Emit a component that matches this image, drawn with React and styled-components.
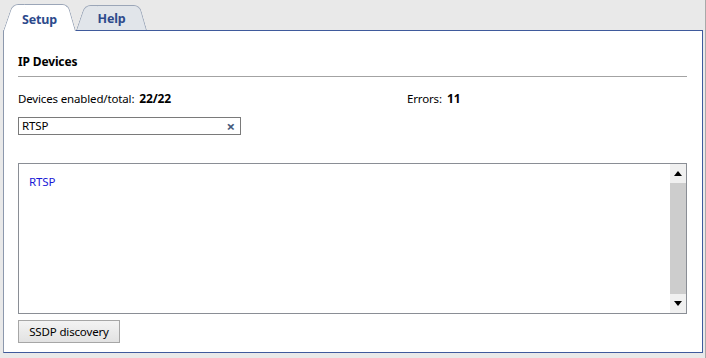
import React from "react";
import styled, { createGlobalStyle } from "styled-components";

const GlobalStyle = createGlobalStyle`
  html, body {
    margin: 0;
    padding: 0;
    background: #e9e9e9;
  }
  body {
    font-family: "Noto Sans", "Open Sans", sans-serif;
    font-size: 11.5px;
    letter-spacing: -0.15px;
    color: #000;
  }
`;

const Page = styled.div`
  box-sizing: border-box;
  width: 706px;
  height: 358px;
  padding: 4px 0 0 3px;
  border-right: 1px solid #a9a9a9;
  overflow: hidden;
`;

const TabRow = styled.div`
  display: flex;
  align-items: flex-end;
  height: 26px;
  position: relative;
  z-index: 2;
`;

const Tab = styled.div`
  position: relative;
  box-sizing: border-box;
  width: ${(p) => p.$width}px;
  height: ${(p) => (p.$active ? 27 : 25)}px;
  margin-bottom: ${(p) => (p.$active ? -1 : 0)}px;
  z-index: ${(p) => (p.$active ? 2 : 1)};
  display: flex;
  align-items: center;
  justify-content: center;
  padding-top: ${(p) => (p.$active ? 4 : 2)}px;
  font-size: 12.5px;
  font-weight: bold;
  color: #2d4a8c;
  cursor: pointer;

  &::before,
  &::after {
    content: "";
    position: absolute;
    top: 0;
    bottom: 0;
    width: 60%;
    box-sizing: border-box;
    background: ${(p) => (p.$active ? "#fff" : "#e1e5ea")};
    border-top: 1px solid #9ba6b8;
  }
  &::before {
    left: 0;
    border-left: 1px solid #9ba6b8;
    border-top-left-radius: 6px;
    transform: skewX(-19deg);
    transform-origin: bottom left;
  }
  &::after {
    right: 0;
    border-right: 1px solid #9ba6b8;
    border-top-right-radius: 6px;
    transform: skewX(16deg);
    transform-origin: bottom right;
  }

  span {
    position: relative;
    z-index: 1;
  }
`;

const Panel = styled.div`
  box-sizing: border-box;
  width: 700px;
  height: 323px;
  background: #fff;
  border: 1px solid #3f5a9c;
  border-left-color: #8c98ad;
  padding: 23px 15px 0 14px;
  display: flex;
  flex-direction: column;
  position: relative;
  z-index: 1;
`;

const Heading = styled.div`
  font-weight: bold;
  font-size: 12px;
  line-height: 16px;
  padding-bottom: 6px;
  border-bottom: 1px solid #a3a3a3;
`;

const StatsRow = styled.div`
  display: flex;
  line-height: 16px;
  margin-top: 14px;
`;

const Stat = styled.div`
  width: ${(p) => p.$width || "auto"};
  white-space: nowrap;

  b {
    margin-left: 5px;
    font-size: 12px;
  }
`;

const SearchBox = styled.div`
  box-sizing: border-box;
  width: 223px;
  height: 18px;
  margin-top: 10px;
  border: 1px solid #7a7a7a;
  display: flex;
  align-items: center;
  padding: 0 5px 0 3px;
`;

const SearchText = styled.div`
  flex: 1;
  line-height: 16px;
`;

const ClearButton = styled.span`
  font-size: 15px;
  font-weight: bold;
  color: #44587c;
  line-height: 16px;
  cursor: pointer;
`;

const ListBox = styled.div`
  box-sizing: border-box;
  height: 151px;
  margin-top: 28px;
  border: 1px solid #8a8e95;
  display: flex;
`;

const ListItems = styled.div`
  flex: 1;
  padding: 10px 0 0 10px;
`;

const ListLink = styled.a`
  color: #1a1ad6;
  text-decoration: none;
  line-height: 16px;
`;

const ScrollBar = styled.div`
  width: 16px;
  display: flex;
  flex-direction: column;
  background: #f0f0f0;
`;

const ScrollButton = styled.div`
  height: 19px;
  display: flex;
  align-items: center;
  justify-content: center;

  &::after {
    content: "";
    width: 0;
    height: 0;
    border-left: 4px solid transparent;
    border-right: 4px solid transparent;
    ${(p) =>
      p.$dir === "up"
        ? "border-bottom: 5px solid #000;"
        : "border-top: 5px solid #000;"}
  }
`;

const ScrollThumb = styled.div`
  flex: 1;
  background: #cdcdcd;
`;

const Button = styled.button`
  box-sizing: border-box;
  align-self: flex-start;
  margin-top: 6px;
  width: 102px;
  height: 23px;
  border: 1px solid #a6a6a6;
  background: linear-gradient(#f3f3f3, #e2e2e2);
  font-family: inherit;
  font-size: 11.5px;
  letter-spacing: -0.15px;
  color: #000;
  padding: 0;
`;

export default function App() {
  return (
    <Page>
      <GlobalStyle />
      <TabRow>
        <Tab $active $width={73}>
          <span>Setup</span>
        </Tab>
        <Tab $width={71}>
          <span>Help</span>
        </Tab>
      </TabRow>
      <Panel>
        <Heading>IP Devices</Heading>
        <StatsRow>
          <Stat $width="389px">
            Devices enabled/total:<b>22/22</b>
          </Stat>
          <Stat>
            Errors:<b>11</b>
          </Stat>
        </StatsRow>
        <SearchBox>
          <SearchText>RTSP</SearchText>
          <ClearButton>×</ClearButton>
        </SearchBox>
        <ListBox>
          <ListItems>
            <ListLink href="#">RTSP</ListLink>
          </ListItems>
          <ScrollBar>
            <ScrollButton $dir="up" />
            <ScrollThumb />
            <ScrollButton $dir="down" />
          </ScrollBar>
        </ListBox>
        <Button>SSDP discovery</Button>
      </Panel>
    </Page>
  );
}
